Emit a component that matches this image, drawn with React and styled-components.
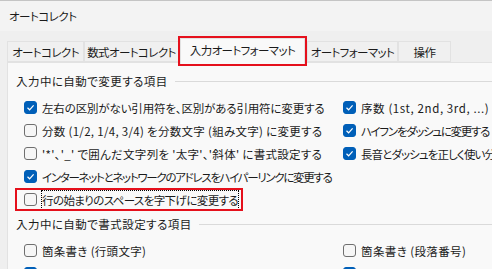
import React from "react";
import styled, { createGlobalStyle } from "styled-components";

const GlobalStyle = createGlobalStyle`
  html, body {
    margin: 0;
    padding: 0;
    overflow: hidden;
    background: #efefef;
  }
  body {
    font-family: "Noto Sans CJK JP", "Noto Sans", sans-serif;
    font-feature-settings: "palt";
    color: #1b1b1b;
  }
`;

const tabs = [
  { name: "オートコレクト", w: 77 },
  { name: "数式オートコレクト", w: 95 },
  { name: "入力オートフォーマット", w: 125, active: true },
  { name: "オートフォーマット", w: 91 },
  { name: "操作", w: 53 },
];

// sp: letter-spacing per label, to keep the line lengths of the dialog
const typing = [
  {
    left: { text: "左右の区別がない引用符を、区別がある引用符に変更する", on: true },
    right: { text: "序数 (1st, 2nd, 3rd, ...) を上付き文字に変更する", on: true, sp: 0.6 },
  },
  {
    left: { text: "分数 (1/2, 1/4, 3/4) を分数文字 (組み文字) に変更する", sp: 0.3 },
    right: { text: "ハイフンをダッシュに変更する", on: true, sp: -1.3 },
  },
  {
    left: { text: "'*'、'_' で囲んだ文字列を '太字'、'斜体' に書式設定する", sp: 0.3 },
    right: { text: "長音とダッシュを正しく使い分ける", on: true, sp: -0.9 },
  },
  { left: { text: "インターネットとネットワークのアドレスをハイパーリンクに変更する", on: true, sp: -1.3 } },
  { left: { text: "行の始まりのスペースを字下げに変更する", marked: true, sp: -0.6 } },
];

const formatting = [
  { left: { text: "箇条書き (行頭文字)", sp: 0.3 }, right: { text: "箇条書き (段落番号)", sp: 0.4 } },
  { left: { text: "罫線", on: true }, right: { text: "表", on: true } },
];

const Check = ({ on }) => (
  <Box $on={on}>
    {on && (
      <svg width="9" height="9" viewBox="0 0 9 9">
        <path d="M1.5 4.8 L3.6 6.8 L7.6 2.4" fill="none" stroke="#fff" strokeWidth="1.2" />
      </svg>
    )}
  </Box>
);

const Option = ({ text, on, marked, sp = -0.15 }) => (
  <Item $marked={marked}>
    <Check on={on} />
    <Label $focus={marked} $sp={sp}>
      {text}
    </Label>
  </Item>
);

const Section = ({ title, rows }) => (
  <Group>
    <Heading>
      <span>{title}</span>
      <Rule />
    </Heading>
    <Grid>
      {rows.map((r, i) => (
        <React.Fragment key={i}>
          <Option {...r.left} />
          {r.right ? <Option {...r.right} /> : <span />}
        </React.Fragment>
      ))}
    </Grid>
  </Group>
);

const App = () => (
  <>
    <GlobalStyle />
    <Dialog>
      <TitleBar>オートコレクト</TitleBar>
      <TabStrip>
        {tabs.map((t) => (
          <Tab key={t.name} $w={t.w} $active={t.active}>
            {t.name}
          </Tab>
        ))}
      </TabStrip>
      <Panel>
        <Section title="入力中に自動で変更する項目" rows={typing} />
        <Section title="入力中に自動で書式設定する項目" rows={formatting} />
      </Panel>
    </Dialog>
  </>
);

const Dialog = styled.div`
  width: 620px;
  height: 269px;
  display: flex;
  flex-direction: column;
  font-size: 11.5px;
  letter-spacing: -0.15px;
  line-height: 16px;
`;

const TitleBar = styled.div`
  height: 30px;
  border-top: 1px solid #c4c4c4;
  background: #f3f3f3;
  display: flex;
  align-items: center;
  padding-left: 9px;
  letter-spacing: -0.5px;
`;

const TabStrip = styled.div`
  display: flex;
  align-items: flex-end;
  height: 31px;
  padding-left: 7px;
  background: #efefef;
`;

const Tab = styled.div`
  box-sizing: border-box;
  width: ${(p) => p.$w}px;
  height: ${(p) => (p.$active ? 26 : 21)}px;
  margin: ${(p) => (p.$active ? "0 2px -2px 1px" : "0")};
  border: 1px solid #e2e2e2;
  border-bottom: ${(p) => (p.$active ? "none" : "1px solid #e2e2e2")};
  background: ${(p) => (p.$active ? "#f9f9f9" : "#f0f0f0")};
  outline: ${(p) => (p.$active ? "2px solid #e5101c" : "none")};
  outline-offset: 0;
  position: relative;
  z-index: ${(p) => (p.$active ? 1 : 0)};
  display: flex;
  justify-content: center;
  align-items: ${(p) => (p.$active ? "flex-start" : "center")};
  padding-top: ${(p) => (p.$active ? "3px" : "0")};
  letter-spacing: -0.6px;
  white-space: nowrap;
`;

const Panel = styled.div`
  flex: 1;
  background: #f9f9f9;
  border-top: 1px solid #e2e2e2;
  border-left: 1px solid #e2e2e2;
  margin-left: 7px;
  padding: 10px 0 0 8px;
  overflow: hidden;
`;

const Group = styled.div`
  & + & {
    margin-top: 5px;
  }
`;

const Heading = styled.div`
  display: flex;
  align-items: center;
  gap: 7px;
  height: 16px;
  letter-spacing: 0.45px;
  white-space: nowrap;
`;

const Rule = styled.div`
  flex: 1;
  height: 1px;
  background: #dadada;
`;

const Grid = styled.div`
  display: grid;
  grid-template-columns: 319px 1fr;
  grid-auto-rows: 23px;
  margin-top: 7px;
  padding-left: 8px;
`;

const Item = styled.div`
  display: flex;
  align-items: center;
  gap: 3px;
  white-space: nowrap;
  ${(p) =>
    p.$marked &&
    `
    justify-self: start;
    margin-left: -9px;
    padding: 0 4px 0 9px;
    outline: 2px solid #e5101c;
    outline-offset: -2px;
  `}
`;

const Box = styled.span`
  box-sizing: border-box;
  flex: none;
  width: 13px;
  height: 13px;
  border-radius: 3px;
  display: flex;
  align-items: center;
  justify-content: center;
  background: ${(p) => (p.$on ? "#005fb8" : "#f6f6f6")};
  border: 1px solid ${(p) => (p.$on ? "#005fb8" : "#6f6f6f")};
  margin-right: 1px;
`;

const Label = styled.span`
  padding: 1px 0;
  letter-spacing: ${(p) => p.$sp}px;
  border: 1px dotted ${(p) => (p.$focus ? "#000" : "transparent")};
`;

export default App;
